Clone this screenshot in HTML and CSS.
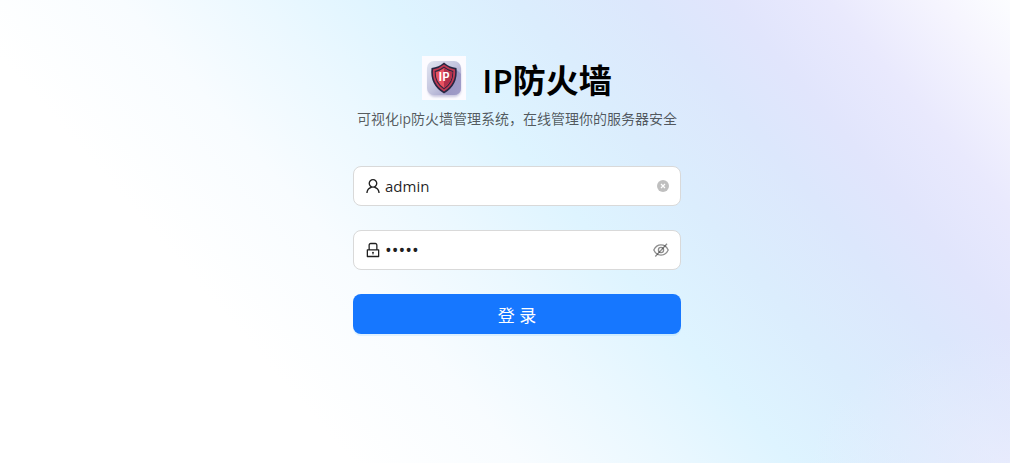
FILE: index.html
```html
<!DOCTYPE html>
<html lang="zh-CN">
<head>
<meta charset="utf-8">
<meta name="viewport" content="width=device-width, initial-scale=1">
<title>IP防火墙</title>
<link rel="stylesheet" href="styles.css">
</head>
<body>
<main class="page">
  <header class="brand">
    <div class="brand-row">
      <svg class="logo" viewBox="0 0 44 44" aria-hidden="true">
        <defs>
          <linearGradient id="tile" x1="0" y1="0" x2="1" y2="1">
            <stop offset="0" stop-color="#e2e6f1"/>
            <stop offset=".5" stop-color="#c3c4de"/>
            <stop offset="1" stop-color="#9591c1"/>
          </linearGradient>
          <linearGradient id="shade" x1="0" y1="0" x2="1" y2="1">
            <stop offset="0" stop-color="#7d78ae"/>
            <stop offset="1" stop-color="#a5a1cc"/>
          </linearGradient>
          <filter id="soft" x="-20%" y="-20%" width="140%" height="140%"><feGaussianBlur stdDeviation="1.2"/></filter>
        </defs>
        <rect width="44" height="44" fill="#fcfbff"/>
        <rect x="6" y="8" width="33" height="33" rx="7" fill="#c9c6df" filter="url(#soft)"/>
        <rect x="5" y="5" width="34" height="34" rx="7" fill="url(#tile)"/>
        <path d="M34 13 L39 18 V32 Q39 39 32 39 H25 L22 37Z" fill="url(#shade)" opacity=".7"/>
        <path d="M22 6.500 Q27 11 34.500 12 Q36.500 29 22 37.500 Q7.500 29 9.500 12 Q17 11 22 6.500Z" fill="#272642"/>
        <path d="M22 8.500 Q27 12.500 33 13.500 Q34.500 27.500 22 35.500 Q9.500 27.500 11 13.500 Q17 12.500 22 8.500Z" fill="#c23a53"/>
        <path d="M22 10.500 Q26.500 14 31.300 15 Q32 27 22 33.500 Q12 27 12.700 15 Q17.500 14 22 10.500Z" fill="#382640"/>
        <path d="M22 12 Q26 15 30.300 16 Q30.500 26 22 32 Q13.500 26 13.700 16 Q18 15 22 12Z" fill="#e85360"/>
        <path d="M22 12 Q26 15 30.300 16 Q30.500 26 22 32Z" fill="#b22f4b"/>
        <text class="logo-text" x="22" y="25" text-anchor="middle">IP</text>
      </svg>
      <h1 class="title">IP防火墙</h1>
    </div>
    <p class="subtitle">可视化ip防火墙管理系统，在线管理你的服务器安全</p>
  </header>

  <form class="form">
    <div class="field">
      <label class="prefix" for="username" aria-label="用户名">
        <svg class="icon" viewBox="64 64 896 896" aria-hidden="true"><path d="M858.500 763.600a374 374 0 00-80.600-119.500 375.630 375.630 0 00-119.500-80.600c-.4-.2-.8-.3-1.200-.5C719.500 518 760 444.700 760 362c0-137-111-248-248-248S264 225 264 362c0 82.700 40.500 156 102.800 201.100-.4.200-.8.300-1.200.5-44.800 18.900-85 46-119.500 80.600a375.630 375.630 0 00-80.600 119.500A371.700 371.700 0 00136 901.800a8 8 0 008 8.200h60c4.400 0 7.900-3.500 8-7.800 2-77.200 33-149.500 87.800-204.300 56.700-56.700 132-87.900 212.200-87.900s155.500 31.200 212.200 87.900C779 752.700 810 825 812 902.200c.1 4.400 3.600 7.800 8 7.800h60a8 8 0 008-8.200c-1-47.800-10.900-94.300-29.500-138.200zM512 534c-45.900 0-89.100-17.900-121.600-50.400S340 407.900 340 362c0-45.900 17.900-89.100 50.400-121.600S466.100 190 512 190s89.100 17.900 121.600 50.400S684 316.100 684 362c0 45.900-17.900 89.100-50.400 121.600S557.900 534 512 534z"/></svg>
      </label>
      <input class="input" id="username" type="text" value="admin" autocomplete="username">
      <button class="suffix clear" type="button" aria-label="清除">
        <svg class="icon-small" viewBox="0 0 12 12" aria-hidden="true"><circle cx="6" cy="6" r="6" fill="currentColor"/><path d="M4 4 8 8M8 4 4 8" stroke="#fff" stroke-width="1.200"/></svg>
      </button>
    </div>
    <div class="field">
      <label class="prefix" for="password" aria-label="密码">
        <svg class="icon" viewBox="64 64 896 896" aria-hidden="true"><path d="M832 464h-68V240c0-70.700-57.300-128-128-128H388c-70.700 0-128 57.300-128 128v224h-68c-17.700 0-32 14.300-32 32v384c0 17.700 14.300 32 32 32h640c17.700 0 32-14.300 32-32V496c0-17.700-14.300-32-32-32zM332 240c0-30.900 25.100-56 56-56h248c30.900 0 56 25.100 56 56v224H332V240zm460 600H232V536h560v304zM484 701v53c0 4.400 3.600 8 8 8h40c4.400 0 8-3.600 8-8v-53a48.010 48.010 0 10-56 0z"/></svg>
      </label>
      <input class="input password" id="password" type="password" value="admin" autocomplete="current-password">
      <button class="suffix eye" type="button" aria-label="显示密码">
        <svg class="icon" viewBox="0 0 16 16" aria-hidden="true"><g fill="none" stroke="currentColor" stroke-width="1.300"><path d="M.8 8Q3.200 2.900 8 2.900T15.200 8Q12.800 13.100 8 13.100T.8 8Z"/><circle cx="8" cy="8" r="2.600"/><path d="M2.300 14.500 14 1.800"/></g></svg>
      </button>
    </div>
    <button class="submit" type="submit">登 录</button>
  </form>
</main>
</body>
</html>
```
FILE: styles.css
```css
* {
  box-sizing: border-box;
}

body {
  margin: 0;
  font-family: "Open Sans", "Noto Sans CJK SC", sans-serif;
  color: rgba(0, 0, 0, 0.88);
}

.page {
  display: flex;
  flex-direction: column;
  align-items: center;
  gap: 36px;
  min-height: 100vh;
  padding: 56px 0 32px 24px;
  background:
    radial-gradient(ellipse 200px 130px at 100% 100%, rgba(236, 236, 253, 0.7), rgba(236, 236, 253, 0)),
    linear-gradient(49deg, #fff 25%, #f8fcff 37%, #ebf8ff 47%, #def4ff 56%, #dbedfd 65%, #dce7fc 74%, #e1e5fc 80%, #e9e9fd 87%, #f6f5fe 95%, #fcfdff 100%);
}

.brand {
  display: flex;
  flex-direction: column;
  align-items: center;
  gap: 8px;
}

.brand-row {
  display: flex;
  align-items: center;
  gap: 16px;
  height: 44px;
}

.logo {
  width: 44px;
  height: 44px;
}

.logo-text {
  font: bold 11px "Noto Sans CJK SC", sans-serif;
  fill: #fff;
}

.title {
  margin: 0;
  padding-top: 6px;
  font-size: 33px;
  font-weight: 600;
  line-height: 44px;
  color: #000;
}

.subtitle {
  margin: 0;
  font-size: 14px;
  line-height: 22px;
  color: rgba(0, 0, 0, 0.65);
}

.form {
  display: flex;
  flex-direction: column;
  gap: 24px;
  width: 100%;
  max-width: 328px;
}

.field {
  display: flex;
  align-items: center;
  gap: 4px;
  height: 40px;
  padding: 0 11px;
  border: 1px solid #d9d9d9;
  border-radius: 8px;
  background: #fff;
}

.prefix,
.suffix {
  display: flex;
  flex: none;
}

.icon {
  width: 16px;
  height: 16px;
  fill: currentColor;
}

.icon-small {
  width: 12px;
  height: 12px;
}

.input {
  flex: 1;
  min-width: 0;
  padding: 0;
  border: 0;
  outline: 0;
  background: none;
  font: inherit;
  font-size: 15px;
  line-height: 24px;
  color: inherit;
}

.password {
  font-size: 18px;
}

.suffix {
  padding: 0;
  border: 0;
  background: none;
  cursor: pointer;
}

.clear {
  color: rgba(0, 0, 0, 0.25);
}

.eye {
  color: rgba(0, 0, 0, 0.45);
}

.submit {
  height: 40px;
  padding: 4px 16px 0;
  border: 0;
  border-radius: 8px;
  background: #1677ff;
  box-shadow: 0 2px 0 rgba(5, 145, 255, 0.1);
  color: #fff;
  font-family: inherit;
  font-size: 17px;
  line-height: 24px;
  cursor: pointer;
}
```
